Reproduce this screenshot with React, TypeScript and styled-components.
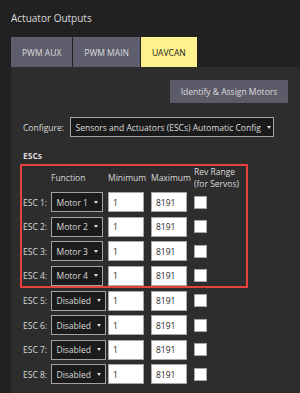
import styled, { createGlobalStyle } from "styled-components";

const GlobalStyle = createGlobalStyle`
  html, body {
    margin: 0;
    padding: 0;
    background: #212121;
    overflow: hidden;
  }
  body {
    font-family: "Open Sans", "DejaVu Sans", sans-serif;
    font-size: 8.5px;
    color: #d9d9d9;
  }
  * {
    box-sizing: border-box;
  }
`;

const COLUMNS = "28px 57px 43px 43px auto";

const escs = [
  { id: 1, fn: "Motor 1" },
  { id: 2, fn: "Motor 2" },
  { id: 3, fn: "Motor 3" },
  { id: 4, fn: "Motor 4" },
  { id: 5, fn: "Disabled" },
  { id: 6, fn: "Disabled" },
  { id: 7, fn: "Disabled" },
  { id: 8, fn: "Disabled" },
];

const Dropdown = ({ value, wide }: { value: string; wide?: boolean }) => (
  <Combo $wide={wide}>
    <ComboText>{value}</ComboText>
    <Caret />
  </Combo>
);

const EscRows = ({ items }: { items: typeof escs }) => (
  <EscGrid>
    {items.map((esc) => (
      <Row key={esc.id}>
        <EscLabel>ESC {esc.id}:</EscLabel>
        <Cell>
          <Dropdown value={esc.fn} />
        </Cell>
        <Cell>
          <NumberField>1</NumberField>
        </Cell>
        <Cell>
          <NumberField>8191</NumberField>
        </Cell>
        <Cell>
          <Checkbox />
        </Cell>
      </Row>
    ))}
  </EscGrid>
);

export default function App() {
  return (
    <Page>
      <GlobalStyle />
      <Title>Actuator Outputs</Title>
      <TabBar>
        <Tab>PWM AUX</Tab>
        <Tab>PWM MAIN</Tab>
        <Tab $active>UAVCAN</Tab>
      </TabBar>
      <Panel>
        <ButtonRow>
          <Button>Identify &amp; Assign Motors</Button>
        </ButtonRow>
        <ConfigRow>
          <FieldLabel>Configure:</FieldLabel>
          <Dropdown value="Sensors and Actuators (ESCs) Automatic Config" wide />
        </ConfigRow>
        <SectionTitle>ESCs</SectionTitle>
        <Highlight>
          <HeaderGrid>
            <span />
            <HeaderCell>Function</HeaderCell>
            <HeaderCell>Minimum</HeaderCell>
            <HeaderCell>Maximum</HeaderCell>
            <HeaderCell>
              Rev Range
              <br />
              (for Servos)
            </HeaderCell>
          </HeaderGrid>
          <EscRows items={escs.slice(0, 4)} />
        </Highlight>
        <Rest>
          <EscRows items={escs.slice(4)} />
        </Rest>
      </Panel>
    </Page>
  );
}

const Page = styled.div`
  min-height: 100vh;
  display: flex;
  flex-direction: column;
  padding: 12px 0 0 11px;
`;

const Title = styled.div`
  font-size: 10px;
  line-height: 12px;
  color: #dcdcdc;
`;

const TabBar = styled.div`
  display: flex;
  gap: 1px;
  margin-top: 13px;
`;

const Tab = styled.div<{ $active?: boolean }>`
  height: 30px;
  padding: 0 11px;
  display: flex;
  align-items: center;
  justify-content: center;
  background: ${(p) => (p.$active ? "#fff18c" : "#5e5d6d")};
  color: ${(p) => (p.$active ? "#222222" : "#dedede")};
`;

const Panel = styled.div`
  flex: 1;
  background: #2d2d2d;
  padding: 13px 12px 8px 12px;
`;

const ButtonRow = styled.div`
  display: flex;
  justify-content: flex-end;
`;

const Button = styled.div`
  width: 118px;
  height: 23px;
  display: flex;
  align-items: center;
  justify-content: center;
  background: #5c5b69;
  color: #dedede;
`;

const ConfigRow = styled.div`
  display: flex;
  align-items: center;
  gap: 6px;
  margin-top: 14px;
`;

const FieldLabel = styled.span`
  color: #d9d9d9;
`;

const Combo = styled.div<{ $wide?: boolean }>`
  display: inline-flex;
  align-items: center;
  justify-content: space-between;
  gap: 6px;
  height: 20px;
  width: ${(p) => (p.$wide ? "204px" : "auto")};
  padding: 0 4px 0 4.5px;
  background: #1b1b1b;
  border: 1px solid #a3a3a3;
  color: #dcdcdc;
  white-space: nowrap;
`;

const ComboText = styled.span``;

const Caret = styled.span`
  width: 0;
  height: 0;
  border-left: 2.5px solid transparent;
  border-right: 2.5px solid transparent;
  border-top: 3px solid #e0e0e0;
`;

const SectionTitle = styled.div`
  margin-top: 13px;
  font-weight: 700;
  line-height: 12px;
`;

const Highlight = styled.div`
  width: 228px;
  margin: 2px 0 0 -3px;
  padding-left: 1px;
  border: 2px solid #e8403f;
`;

const HeaderGrid = styled.div`
  display: grid;
  grid-template-columns: ${COLUMNS};
  align-items: center;
  height: 23px;
  margin-bottom: 3px;
`;

const HeaderCell = styled.span`
  line-height: 11.5px;
  white-space: nowrap;
`;

const EscGrid = styled.div`
  display: flex;
  flex-direction: column;
  gap: 4.5px;
`;

const Row = styled.div`
  display: grid;
  grid-template-columns: ${COLUMNS};
  align-items: center;
  height: 20px;
`;

const EscLabel = styled.span`
  white-space: nowrap;
`;

const Cell = styled.div`
  display: flex;
  align-items: center;
`;

const NumberField = styled.div`
  width: 36px;
  height: 20px;
  display: flex;
  align-items: center;
  padding-left: 4px;
  background: #ffffff;
  border: 1px solid #a8a8a8;
  color: #1e1e1e;
`;

const Checkbox = styled.div`
  width: 13px;
  height: 13px;
  background: #ffffff;
  border: 1px solid #a8a8a8;
`;

const Rest = styled.div`
  margin-top: 3px;
`;
